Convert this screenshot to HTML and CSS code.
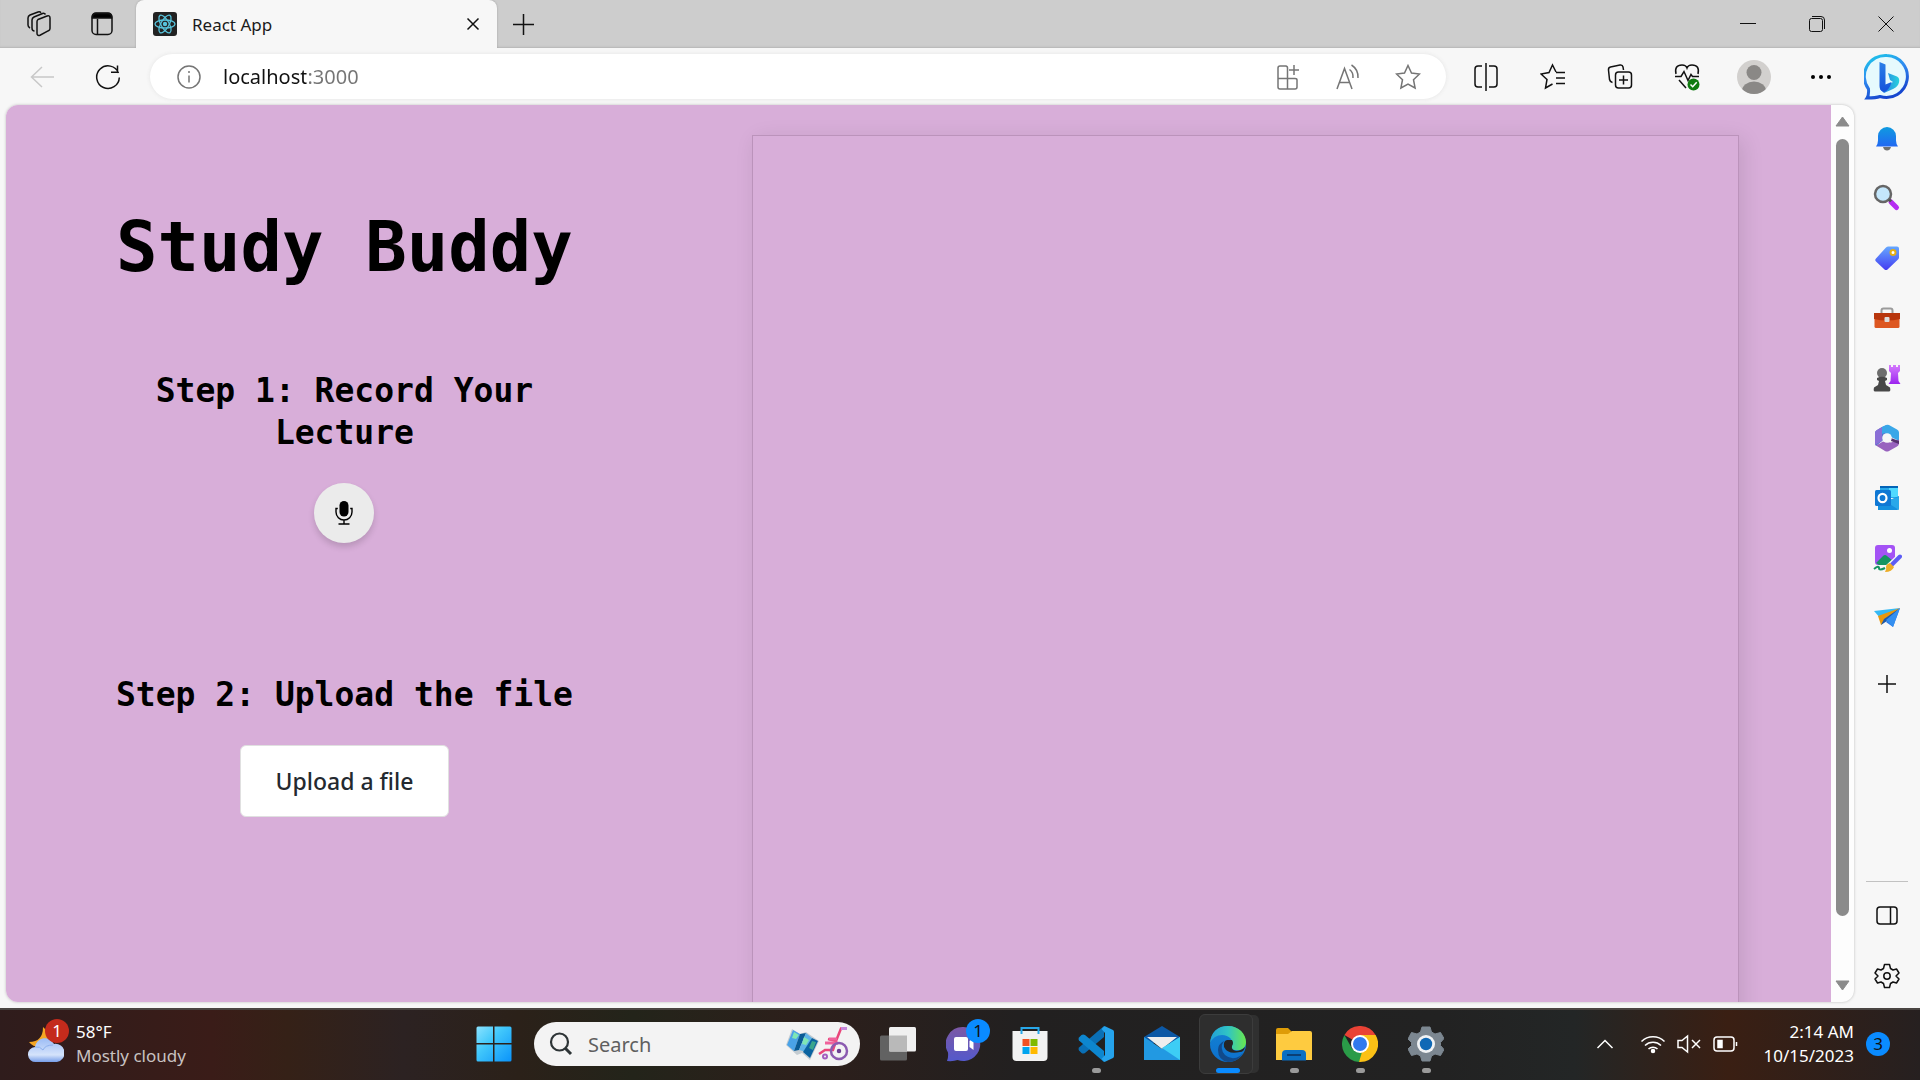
FILE: index.html
```html
<!DOCTYPE html>
<html lang="en">
<head>
  <meta charset="UTF-8" />
  <meta name="viewport" content="width=device-width, initial-scale=1" />
  <title>React App</title>
  <link rel="stylesheet" href="styles.css">
</head>
<body>
  <div class="browser">
    <!-- Tab strip -->
    <header class="tabs">
      <div class="tab-tools">
        <button type="button" aria-label="Workspaces">
          <svg width="24" height="26" viewBox="0 0 24 26" class="line"><path d="M11 8.500l9-3.500q3-1 3 2v10.500q0 1.500-1.500 2.200l-8.500 4.500q-3 1-3-2v-11.500q0-1.500 1-2.200z"/><path d="M7.500 20q-2.500 0-2.500-3v-8q0-2 2-3l8.500-3.500q2-.6 3 1M3 17q-2-1-2-3v-7q0-2 2-3l8-3q2-.6 3 .8"/></svg>
        </button>
        <button type="button" aria-label="Tab actions">
          <svg width="22" height="24" viewBox="0 0 22 24" class="line"><rect x="1" y="1" width="20" height="21.500" rx="4"/><path d="M6.500 7v15"/><path d="M1.500 6V5q0-3.500 3.500-3.500h12q3.500 0 3.500 3.500v1z" fill="#000"/></svg>
        </button>
      </div>
      <div class="tab">
        <svg width="24" height="24" viewBox="0 0 24 24"><rect width="24" height="24" rx="3" fill="#222"/><g fill="none" stroke="#58c4dc" stroke-width="1.300"><ellipse cx="12" cy="12" rx="10" ry="4"/><ellipse cx="12" cy="12" rx="10" ry="4" transform="rotate(60 12 12)"/><ellipse cx="12" cy="12" rx="10" ry="4" transform="rotate(120 12 12)"/></g><circle cx="12" cy="12" r="2.200" fill="#58c4dc"/></svg>
        <span class="tab-title">React App</span>
        <button type="button" aria-label="Close tab">
          <svg width="14" height="14" viewBox="0 0 14 14" class="line"><path d="M1.500 1.500l11 11M12.500 1.500l-11 11"/></svg>
        </button>
      </div>
      <button type="button" class="new-tab" aria-label="New tab">
        <svg width="21" height="21" viewBox="0 0 21 21" class="line"><path d="M10.500 0v21M0 10.500h21"/></svg>
      </button>
      <div class="window-buttons">
        <button type="button" aria-label="Minimize"><svg width="16" height="16" viewBox="0 0 16 16" class="line thin"><path d="M0 7.500h16"/></svg></button>
        <button type="button" aria-label="Restore"><svg width="16" height="16" viewBox="0 0 16 16" class="line thin"><rect x=".5" y="2.500" width="13" height="13" rx="2"/><path d="M3 .5h9q3.500 0 3.500 3.500v9"/></svg></button>
        <button type="button" aria-label="Close"><svg width="16" height="16" viewBox="0 0 16 16" class="line thin"><path d="M.5.5l15 15M15.500.5l-15 15"/></svg></button>
      </div>
    </header>

    <!-- Address bar -->
    <nav class="toolbar">
      <button type="button" class="back" aria-label="Back" disabled>
        <svg width="24" height="22" viewBox="0 0 24 22" class="line"><path d="M12 1L1.500 11 12 21M1.500 11H24"/></svg>
      </button>
      <button type="button" aria-label="Refresh">
        <svg width="26" height="26" viewBox="0 0 26 26" class="line"><path d="M23.500 9A11.300 11.300 0 1 0 24.300 13.500M22.500 1.500V8.200H16"/></svg>
      </button>
      <div class="omnibox">
        <svg width="24" height="24" viewBox="0 0 24 24" class="line gray"><circle cx="12" cy="12" r="11"/><path d="M12 10.500v7M12 6v2"/></svg>
        <input type="text" class="url" value="localhost:3000" aria-label="Address" />
        <button type="button" aria-label="Apps">
          <svg width="24" height="28" viewBox="0 0 24 28" class="line gray"><path d="M10.500 3H4Q2 3 2 5v19q0 2 2 2h15q2 0 2-2v-7q0-1.500-2-1.500H2M11.500 26V5q0-2-2-2M18 2v10M13 7h10"/></svg>
        </button>
        <button type="button" aria-label="Read aloud">
          <svg width="24" height="28" viewBox="0 0 24 28" class="line gray"><path d="M1 26L8.500 5.500 16 26M3.500 19.500h10M13.500 6.500q4 3 3.500 8.500M15.500 2q7 4.500 6.500 13"/></svg>
        </button>
        <button type="button" aria-label="Add to favorites">
          <svg width="26" height="26" viewBox="0 0 26 26" class="line gray"><path d="M13 1.500l3.500 7.500 8 1-6 5.700 1.600 8.300-7.100-4-7.100 4 1.600-8.300-6-5.700 8-1z"/></svg>
        </button>
      </div>
      <div class="toolbar-buttons">
        <button type="button" aria-label="Split screen"><svg width="26" height="28" viewBox="0 0 26 28" class="line"><path d="M9 3H5Q2 3 2 6v15q0 3 3 3h4M16 3h5q3 0 3 3v15q0 3-3 3h-5M13 0v28"/></svg></button>
        <button type="button" aria-label="Favorites"><svg width="26" height="28" viewBox="0 0 26 28" class="line"><path d="M16 9l-3.500-7L9 9.500 1 11l6 5.500L5.500 25l7-4M16 9.500h9M16 15h9M16 20.500h9"/></svg></button>
        <button type="button" aria-label="Collections"><svg width="26" height="28" viewBox="0 0 26 28" class="line"><path d="M5.500 19.500q-2.500-.5-3-3L1.500 7q-.3-2.500 2-3L13 2q2.500-.4 3 2l.5 3"/><rect x="8.500" y="9" width="16" height="16" rx="3"/><path d="M16.500 12.500v9M12 17h9"/></svg></button>
        <button type="button" aria-label="Browser essentials"><svg width="26" height="28" viewBox="0 0 26 28" class="line"><path d="M2 11q-2-9 6-9 4 0 5 3 1-3 5-3 8 0 6 9M5 17l7 8M1 13.500h6l3-5 4 9 3-6 1.500 2H25"/><circle cx="19.500" cy="21.500" r="6" fill="#107c10" stroke="none"/><path d="M16.500 21.500l2.200 2.200 4-4.500" stroke="#fff"/></svg></button>
        <button type="button" aria-label="Profile"><svg width="34" height="34" viewBox="0 0 34 34"><clipPath id="face"><circle cx="17" cy="17" r="17"/></clipPath><g clip-path="url(#face)"><path d="M0 0h34v34H0z" fill="#d2d0ce"/><circle cx="17" cy="12.500" r="7.500" fill="#8a8886"/><ellipse cx="17" cy="31" rx="12" ry="9.500" fill="#8a8886"/></g></svg></button>
        <button type="button" aria-label="Settings and more"><svg width="22" height="6" viewBox="0 0 22 6"><circle cx="3" cy="3" r="2"/><circle cx="11" cy="3" r="2"/><circle cx="19" cy="3" r="2"/></svg></button>
      </div>
    </nav>

    <div class="content">
      <main class="page">
        <section class="steps">
          <h1>Study Buddy</h1>
          <div class="step">
            <h2>Step 1: Record Your Lecture</h2>
            <button type="button" class="mic" aria-label="Record">
              <svg width="18" height="24" viewBox="0 0 18 24"><rect x="4.500" width="9" height="15.500" rx="4.500"/><path d="M2.800 7.500H1V11a8 8 0 0 0 16 0V7.500h-1.800M9 19v4M3.500 23h11" fill="none" stroke="#000" stroke-width="1.400"/></svg>
            </button>
          </div>
          <div class="step upload">
            <h2>Step 2: Upload the file</h2>
            <button type="button" class="upload-button">Upload a file</button>
          </div>
        </section>
        <section class="notes" aria-label="Notes"></section>
      </main>
      <div class="scrollbar">
        <svg width="15" height="11" viewBox="0 0 15 11"><path d="M7.500 1L14 10H1z" fill="#8b8b8b" stroke="#8b8b8b" stroke-linejoin="round"/></svg>
        <div class="track"><div class="thumb"></div></div>
        <svg width="15" height="11" viewBox="0 0 15 11"><path d="M7.500 10L14 1H1z" fill="#8b8b8b" stroke="#8b8b8b" stroke-linejoin="round"/></svg>
      </div>
    </div>

    <!-- Edge sidebar -->
    <aside class="sidebar">
      <button type="button" class="bing" aria-label="Bing chat">
        <svg width="46" height="48" viewBox="0 0 46 48"><defs><linearGradient id="ring" x1="0" y1="0" x2=".4" y2="1"><stop offset="0" stop-color="#1ccbe8"/><stop offset=".5" stop-color="#2f8bf0"/><stop offset="1" stop-color="#1648cf"/></linearGradient><linearGradient id="bee" x1="0" y1="0" x2="0" y2="1"><stop offset="0" stop-color="#2a7fe8"/><stop offset="1" stop-color="#1552da"/></linearGradient><linearGradient id="curl"><stop offset="0" stop-color="#2a6fe8"/><stop offset="1" stop-color="#25d3dc"/></linearGradient></defs><path d="M23 2.500a21 21 0 1 1-7 41q-4 1.500-13 1.500 2-3 1.500-9A21 21 0 0 1 23 2.500z" fill="#e6fafd" stroke="url(#ring)" stroke-width="3"/><path d="M24 20l9 3.500q3 1.500 2 6-1 4-6 6.500l-9 4-4-4 13-7-3-2z" fill="url(#curl)"/><path d="M15.500 9l6 2.500v20l6-2.500q-2 8-7.500 10-4.500-1-4.500-6z" fill="url(#bee)"/></svg>
      </button>
      <div class="apps">
        <button type="button" aria-label="Notifications"><svg width="28" height="28" viewBox="0 0 28 28"><defs><linearGradient id="bell" x2="0" y2="1"><stop stop-color="#0f9be0"/><stop offset="1" stop-color="#2268f2"/></linearGradient></defs><path d="M10 23h8q-1 3.500-4 3.500T10 23z" fill="#707070"/><path d="M3 22.500q2-3 2-6V12a9 9 0 0 1 18 0v4.500q0 3 2 6z" fill="url(#bell)"/></svg></button>
        <button type="button" aria-label="Search"><svg width="28" height="28" viewBox="0 0 28 28"><path d="M18 18l5.500 5.500" stroke="#b52df1" stroke-width="5" stroke-linecap="round"/><circle cx="10" cy="10" r="8" fill="#c4e7fc" stroke="#666" stroke-width="2.500"/><path d="M16 15.500l2 2" stroke="#555" stroke-width="3"/></svg></button>
        <button type="button" aria-label="Shopping"><svg width="28" height="28" viewBox="0 0 28 28"><defs><linearGradient id="tag" x2="0" y2="1"><stop stop-color="#66a8ff"/><stop offset="1" stop-color="#443df2"/></linearGradient></defs><path d="M15 2.500h9q2 0 2 2v9q0 1-1 2L14.500 25.500q-1.500 1-3 0l-8.500-8q-1.500-1.500 0-3L12.500 4q1-1.500 2.500-1.500z" fill="url(#tag)"/><circle cx="20" cy="8.500" r="2.500" fill="#fff" stroke="#e6ae12" stroke-width="2"/></svg></button>
        <button type="button" aria-label="Tools"><svg width="28" height="28" viewBox="0 0 28 28"><path d="M8.500 10V6.500q0-2 2-2h7q2 0 2 2V10" fill="none" stroke="#9b9b9b" stroke-width="2"/><rect x="1.500" y="11" width="25" height="13" rx="1.500" fill="#dd5721"/><path d="M1 9h26v6q-13 3-26 0z" fill="#b8360d"/><rect x="11.500" y="13" width="5" height="5" rx="1" fill="#ddd"/></svg></button>
        <button type="button" aria-label="Games"><svg width="28" height="28" viewBox="0 0 28 28"><defs><linearGradient id="rook" x2="0" y2="1"><stop stop-color="#d47bfd"/><stop offset="1" stop-color="#9c24ef"/></linearGradient></defs><path d="M16 1h2v2h2V1h3v2h2V1h2v6l-2 2 .5 8 2 3H15.500l2-3 .5-8-2-2z" fill="url(#rook)"/><circle cx="9" cy="9" r="5" fill="#6d6d6d"/><path d="M4 14q5-2.500 10 0v2l-2 1 1 4 4 2.500q1 4-1 4H2q-2 0-1-4l4-2.500 1-4-2-1z" fill="#484848"/></svg></button>
        <button type="button" aria-label="Microsoft 365"><svg width="28" height="28" viewBox="0 0 28 28"><path d="M9 3L14 1l2 9-7 7-6 5q-1-1-1-3V9q0-2 2-3z" fill="#5470cc"/><path d="M9 3v14l-7 4V9q0-2 2-3z" fill="#8a6fd6"/><path d="M9 3l4-2q1.500-.5 3 0l8 4.500q2 1 2 3V17l-8-4-6-4-3 1z" fill="#3aa7e8"/><path d="M3 21.500l7-4 8 1 8-3v4q0 2-2 3l-8 4.500q-2 1-4 0z" fill="#9862be"/><path d="M18 14l8 3v3l-8-3z" fill="#57326f"/><circle cx="14" cy="14" r="4.800" fill="#f7f7f7"/></svg></button>
        <button type="button" aria-label="Outlook"><svg width="28" height="28" viewBox="0 0 28 28"><path d="M7 2h18v12H7z" fill="#28a8ea"/><path d="M16 3h9v10h-9z" fill="#50d9ff"/><path d="M7 2h18v2H7z" fill="#0364b8"/><path d="M5 12l10 5 11-5v12q0 2-2 2H5z" fill="#1490df"/><path d="M26 13v13L12 17z" fill="#28a8ea"/><rect x="2" y="6" width="16" height="16" rx="1.500" fill="#0f78d4"/><ellipse cx="9.500" cy="14" rx="4" ry="4.200" fill="none" stroke="#fff" stroke-width="2.200"/></svg></button>
        <button type="button" aria-label="Image creator"><svg width="30" height="30" viewBox="0 0 30 30"><rect x="3" y="2" width="20" height="20" rx="3" fill="#a453f5"/><path d="M4 20l7-7q2-2 4 0l6 5-4 4H7z" fill="#169462"/><circle cx="17.500" cy="7.500" r="2.500" fill="#fff"/><path d="M29 13L16 25" stroke="#f7f7f7" stroke-width="7"/><path d="M28 13.500l-8 8" stroke="#5c5cf5" stroke-width="4" stroke-linecap="round"/><path d="M18 20l4 4q-2 5-9 5 2-3 1-5 0-3 4-4z" fill="#edae28"/><path d="M2 26q5-4 5-1t6 0" fill="none" stroke="#169462" stroke-width="2"/></svg></button>
        <button type="button" aria-label="Drop"><svg width="28" height="28" viewBox="0 0 28 28"><path d="M1 7L27 4 8 15z" fill="#35b9f4"/><path d="M27 4L20 23 13 18z" fill="#2575e8"/><path d="M27 4L5 12l3 9z" fill="#e9970c"/><path d="M8 21l3-6L27 4 14 17z" fill="#1b59ad"/><path d="M27 4L13 16l7 7z" fill="#348ff0"/></svg></button>
      </div>
      <button type="button" class="add-app" aria-label="Customize"><svg width="18" height="18" viewBox="0 0 18 18" class="line"><path d="M9 0v18M0 9h18"/></svg></button>
      <div class="sidebar-bottom">
        <button type="button" aria-label="Hide sidebar"><svg width="22" height="20" viewBox="0 0 22 20" class="line"><rect x="1" y="1" width="20" height="17" rx="3"/><path d="M14.500 1v17"/></svg></button>
        <button type="button" aria-label="Settings"><svg width="26" height="26" viewBox="0 0 26 26" class="line"><path d="M10.500 1.500h5l1 4 2.500 1.500 3.500-1 2.500 4-3 3 3 3-2.500 4-3.500-1-2.500 1.500-1 4h-5l-1-4L7 19l-3.500 1L1 16l3-3-3-3 2.500-4L7 7l2.500-1.500z" stroke-linejoin="round"/><circle cx="13" cy="13" r="3.200"/></svg></button>
      </div>
    </aside>
  </div>

  <!-- Windows taskbar -->
  <footer class="taskbar">
    <div class="weather">
      <div class="weather-icon">
        <svg width="36" height="40" viewBox="0 0 36 40"><defs><linearGradient id="cloud" x2="0" y2="1"><stop stop-color="#9cbcf5"/><stop offset=".7" stop-color="#d5e3fb"/><stop offset="1" stop-color="#769de8"/></linearGradient></defs><path d="M15 3q5 4 5 10 0 9-9 10-6 0-10-5 14 0 14-15z" fill="#f5a623"/><path d="M8 38a7.500 7.500 0 0 1-1-15 10 10 0 0 1 19-3 9 9 0 0 1 3 18z" fill="url(#cloud)"/><path d="M7 23q5-1 8 3 2-5 10-5" fill="none" stroke="#8db0ed"/></svg>
        <span class="alert">1</span>
      </div>
      <div class="weather-text">
        <span>58°F</span>
        <span class="muted">Mostly cloudy</span>
      </div>
    </div>

    <div class="dock">
      <button type="button" class="app" aria-label="Start"><svg width="36" height="36" viewBox="0 0 36 36"><defs><linearGradient id="win" x2="1" y2="1"><stop stop-color="#8be3ff"/><stop offset=".4" stop-color="#42c8fb"/><stop offset="1" stop-color="#0a93fa"/></linearGradient></defs><path d="M2 .5h15v16.500H.5V2Q.5.500 2 .5zM18.500.5H34q1.500 0 1.500 1.500v15h-17zM.5 18.500H17v17H2q-1.500 0-1.500-1.500zM18.500 18.500h17V34q0 1.500-1.500 1.500H18.500z" fill="url(#win)"/></svg></button>
      <div class="search">
        <svg width="24" height="24" viewBox="0 0 24 24"><circle cx="10.500" cy="10" r="8.500" fill="none" stroke="#2d3436" stroke-width="2.200"/><path d="M16.500 16.500l5.500 5.500" stroke="#2d3436" stroke-width="3"/></svg>
        <input type="search" placeholder="Search" aria-label="Search" />
        <svg width="64" height="34" viewBox="0 0 64 34"><path d="M7 2l8 5 6-2 13 9-9 19-8-7-5 2L1 18z" fill="#c4ccd2"/><path d="M8 3l7 4-6 17-7-6z" fill="#4aa3e8"/><path d="M15 7l6-1-7 17-5 1z" fill="#0a5c96"/><path d="M21 6l6 5-5 14-8-2z" fill="#5db4e8"/><path d="M27 11l6 3-8 17-7-6z" fill="#0b63a0"/><path d="M9 5l5 3-3 4-4-1zM19 10l5 3-3 5-4-1z" fill="#7fe7b4"/><path d="M27 14l4 1-3 8-4-2z" fill="#39a58c"/><g fill="none" stroke-width="2.500"><path d="M62 1.500h-6L51 14l-8-2M51 14l-3 9H40l-6 4" stroke="#e9467a"/><path d="M40 16h13M44 12h8" stroke="#f0629b" stroke-width="3"/><circle cx="54" cy="24" r="8" stroke="#8b5bb0"/><circle cx="54" cy="24" r="1" stroke="#6a3d91"/><circle cx="40" cy="29.500" r="2" stroke="#a35ec0" stroke-width="2"/></g><path d="M56 1.500h6" stroke="#c689dc" stroke-width="3"/></svg>
      </div>
      <button type="button" class="app" aria-label="Task view"><svg width="36" height="36" viewBox="0 0 36 36"><rect y="9.500" width="27" height="25" rx="1.500" fill="#626262"/><rect x="9" y="1" width="27" height="24.500" rx="1.500" fill="#f0f0f0"/><path d="M9 9.500h18v16H10q-1 0-1-1z" fill="#b9b9b9"/></svg></button>
      <button type="button" class="app" aria-label="Chat"><svg width="36" height="36" viewBox="0 0 36 36"><defs><linearGradient id="chat" x2="0" y2="1"><stop stop-color="#7c58a5"/><stop offset="1" stop-color="#5459cb"/></linearGradient></defs><path d="M17.500 1a17 17 0 1 1-6 33Q8 35.500 1 35q1.500-3 1-8.500A17 17 0 0 1 17.500 1z" fill="url(#chat)"/><rect x="8" y="11" width="14" height="14" rx="2" fill="#fff"/><path d="M23.500 15l4-3v12l-4-3z" fill="#fff"/></svg><span class="count">1</span></button>
      <button type="button" class="app" aria-label="Microsoft Store"><svg width="36" height="36" viewBox="0 0 36 36"><path d="M.5 5h35v26q0 4-4 4h-27q-4 0-4-4z" fill="#f2f2f2"/><path d="M9.500 8V2h17v6" fill="none" stroke="#28a8ea" stroke-width="2"/><path d="M10.500 13h7v7h-7z" fill="#f25022"/><path d="M18.500 13h7v7h-7z" fill="#7fba00"/><path d="M10.500 21h7v7h-7z" fill="#00a4ef"/><path d="M18.500 21h7v7h-7z" fill="#ffb900"/></svg></button>
      <button type="button" class="app running" aria-label="Visual Studio Code"><svg width="36" height="36" viewBox="0 0 36 36"><path d="M26 0v11L7 27q-2 1-3.500 0L1 24.500q-1-1.500 0-3z" fill="#0a6fb5"/><path d="M26 36V25L7 9Q5 8 3.500 9L1 11.500q-1 1.500 0 3z" fill="#0d86cf"/><path d="M26.500 0L35 4q1 .5 1 2v24q0 1.500-1 2l-8.500 4-3-3 3.500-4V7l-3.500-4z" fill="#25a3ec"/></svg></button>
      <button type="button" class="app" aria-label="Mail"><svg width="36" height="36" viewBox="0 0 36 36"><path d="M0 11L18 0l18 11v6H0z" fill="#0c58a5"/><path d="M3 11h30L18 23z" fill="#eee"/><path d="M0 11l18 12L36 11v23H0z" fill="#2299e2"/><path d="M36 11L18 22l18 12z" fill="#3dcdf5"/></svg></button>
      <button type="button" class="app active" aria-label="Microsoft Edge"><svg width="36" height="36" viewBox="0 0 36 36"><defs><linearGradient id="edge1"><stop stop-color="#219fd8"/><stop offset=".5" stop-color="#30c4c4"/><stop offset="1" stop-color="#69e84e"/></linearGradient><linearGradient id="edge2" x2="0" y2="1"><stop stop-color="#1583d2"/><stop offset="1" stop-color="#0c70ce"/></linearGradient></defs><circle cx="18" cy="18" r="18" fill="url(#edge2)"/><path d="M0 17Q2 0 18 0c11 0 18 8 18 16 0 6-5 9-10 8-4 0-5-2-4-4 2-6-3-11-10-11Q4 9 0 17z" fill="url(#edge1)"/><path d="M14 15q-5 7 1 14 7 6 15 1l3-3Q28 36 18 36 8 34 8 24q0-6 6-9z" fill="#114a8b"/><path d="M22 14q2 3 0 6-1 4 4 5 5 0 9-4-1 5-5 5-12 3-16-5-1-6 3-7z" fill="#252525"/></svg></button>
      <button type="button" class="app running" aria-label="File Explorer"><svg width="36" height="36" viewBox="0 0 36 36"><path d="M0 4q0-2 2-2h10l4 4-3 4H0z" fill="#de9c07"/><path d="M0 8h12l4-3h18q2 0 2 2v27H0z" fill="#fecb40"/><path d="M6 34.500V28q0-4 4-4h16q4 0 4 4v6.500z" fill="#0a6fc2"/><path d="M11 29h14" stroke="#0b3f75" stroke-width="2"/></svg></button>
      <button type="button" class="app running" aria-label="Google Chrome"><svg width="36" height="36" viewBox="0 0 36 36"><path d="M18 18L2.400 9A18 18 0 0 1 33.600 9z" fill="#e94235"/><path d="M18 18V9h15.600A18 18 0 0 1 18 36z" fill="#fbc116"/><path d="M2.400 9L10 22.500l8 4.500 4-1-5 10A18 18 0 0 1 2.400 9z" fill="#2a9b48"/><path d="M26 22l-8 14H17l3-10z" fill="#fbc116"/><circle cx="18" cy="18" r="9" fill="#fff"/><circle cx="18" cy="18" r="7" fill="#3079ee"/></svg></button>
      <button type="button" class="app running" aria-label="Settings"><svg width="36" height="36" viewBox="0 0 36 36"><path d="M14 1h8l1.500 5 3.500 2 5.500-1.500 3.500 6-3.500 4v3l3.500 4-3.500 6-5.500-1.500-3.500 2L22 35h-8l-1.500-5L9 28l-5.500 1.500L0 23l3.500-3.500v-3L0 13l3.500-6.500L9 8l3.500-2z" fill="#7c8791" stroke="#7c8791" stroke-linejoin="round"/><circle cx="18" cy="18" r="9" fill="#f1f3f5"/><circle cx="18" cy="18" r="6.200" fill="#0f68b5"/></svg></button>
    </div>

    <div class="tray">
      <svg width="18" height="12" viewBox="0 0 18 12" class="line white chevron"><path d="M1.500 10L9 2.500 16.500 10"/></svg>
      <svg width="26" height="20" viewBox="0 0 26 20" class="line white"><path d="M1.500 7.500a16.500 16.500 0 0 1 23 0M5 11.500a11.500 11.500 0 0 1 16 0M8.500 15a6.500 6.500 0 0 1 9 0"/><circle cx="13" cy="17" r="1.500" fill="#fff"/></svg>
      <svg width="26" height="20" viewBox="0 0 26 20" class="line white"><path d="M2 6.500h4L11.500 2v16L6 13.500H2zM16 6l8 8M24 6l-8 8"/></svg>
      <svg width="26" height="20" viewBox="0 0 26 20" class="line white"><rect x="2" y="3" width="20" height="14" rx="3"/><path d="M24.500 8v4"/><path d="M6 6.500h4v7H6z" fill="#fff"/></svg>
      <div class="clock">
        <span>2:14 AM</span>
        <span>10/15/2023</span>
      </div>
      <span class="notifications">3</span>
    </div>
  </footer>
</body>
</html>
```
FILE: styles.css
```css
* {
  box-sizing: border-box;
}

body {
  font-family: 'Noto Sans', 'Open Sans', sans-serif;
  margin: 0;
  height: 100vh;
  display: flex;
  flex-direction: column;
  overflow: hidden;
}

button {
  display: flex;
  align-items: center;
  justify-content: center;
  padding: 0;
  border: none;
  background: none;
  font-family: inherit;
  color: inherit;
}

svg {
  display: block;
  flex: none;
}

/* Line icons */
.line {
  fill: none;
  stroke: #111;
  stroke-width: 1.5;
}
.thin {
  stroke-width: 1;
}
.gray {
  stroke: #757575;
}
.white {
  stroke: #fff;
}

/* Browser window */
.browser {
  flex: 1;
  min-height: 0;
  display: grid;
  grid-template-columns: 1fr 66px;
  grid-template-rows: 48px 57px 1fr;
  background-color: #f7f7f7;
}

.tabs {
  grid-column: 1 / 3;
  display: flex;
  align-items: stretch;
  background-color: #cdcdcd;
  box-shadow: inset 0 -2px 2px -1px #b5b5b5;
}

.tab-tools {
  display: flex;
  width: 136px;
  padding-left: 7px;
}
.tab-tools button {
  width: 63px;
}

.tab {
  display: flex;
  align-items: center;
  width: 361px;
  padding: 0 17px;
  background-color: #f7f7f7;
  border-radius: 8px 8px 0 0;
  box-shadow: 0 0 2px #999;
  clip-path: inset(0 -3px 0 -3px);
}
.tab-title {
  flex: 1;
  margin-left: 15px;
  font-size: 17px;
  color: #1b1b1b;
}

.new-tab {
  width: 52px;
}

.window-buttons {
  display: flex;
  margin-left: auto;
}
.window-buttons button {
  width: 69px;
}

/* Toolbar */
.toolbar {
  display: flex;
  align-items: center;
  padding-left: 9px;
}
.toolbar > button {
  width: 66px;
  height: 44px;
}
.back svg {
  stroke: #c8c8c8;
}

.omnibox {
  flex: 1;
  display: flex;
  align-items: center;
  height: 45px;
  margin-left: 9px;
  padding: 0 8px 0 27px;
  background-color: #fff;
  border-radius: 23px;
  box-shadow: 0 0 4px #e4e4e4;
}
.omnibox button {
  width: 60px;
  height: 44px;
}

.url {
  flex: 1;
  margin-left: 22px;
  padding: 0;
  border: none;
  outline: none;
  font-family: inherit;
  font-size: 20px;
  /* host in black, port in gray */
  background-image: linear-gradient(90deg, #111 83px, #757575 83px);
  -webkit-background-clip: text;
  background-clip: text;
  color: transparent;
}

.toolbar-buttons {
  display: flex;
  margin-left: 6px;
}
.toolbar-buttons button {
  width: 67px;
  height: 44px;
}

/* Web page */
.content {
  display: flex;
  min-height: 0;
  margin: 0 0 6px 6px;
  border-radius: 12px;
  overflow: hidden;
  background-color: #fdfdfd;
  box-shadow: 0 0 3px #bbb;
}

.page {
  flex: 1;
  display: flex;
  justify-content: space-between;
  padding: 30px 5% 0;
  overflow: hidden;
  background-color: #d8aed9;
}

.steps {
  width: 30%;
  display: flex;
  flex-direction: column;
  align-items: center;
  padding-top: 72px;
  font-family: 'DejaVu Sans Mono', monospace;
  text-align: center;
  color: #000;
}

h1 {
  margin: 0;
  font-size: 69px;
  line-height: 80px;
  white-space: nowrap;
}

h2 {
  margin: 0 0 29px;
  font-size: 33px;
  line-height: 42px;
}

.step {
  display: flex;
  flex-direction: column;
  align-items: center;
  margin-top: 83px;
}
.upload {
  margin-top: 131px;
}

.mic {
  width: 60px;
  height: 60px;
  border-radius: 50%;
  background-color: #ebebeb;
  box-shadow: 0 4px 6px rgba(0, 0, 0, 0.15);
}

.upload-button {
  width: 209px;
  height: 72px;
  border: 1px solid #e0e0e0;
  border-radius: 6px;
  background-color: #fff;
  font-family: 'Noto Sans', 'Open Sans', sans-serif;
  font-size: 23px;
  font-weight: 500;
  color: #24292f;
}

.notes {
  box-sizing: content-box;
  width: 60%;
  height: 120vh;
  flex: none;
  border: 1px solid #bb93bb;
  box-shadow: 4px 4px 20px rgba(0, 0, 0, 0.1);
}

.scrollbar {
  width: 23px;
  display: flex;
  flex-direction: column;
  align-items: center;
  padding: 11px 0;
}
.track {
  flex: 1;
  width: 13px;
  padding: 12px 0 14px;
}
.thumb {
  height: 94%;
  border-radius: 7px;
  background-color: #8b8b8b;
}

/* Sidebar */
.sidebar {
  grid-column: 2;
  grid-row: 2 / 4;
  display: flex;
  flex-direction: column;
  align-items: center;
}
.sidebar button {
  width: 60px;
  height: 60px;
}
.sidebar .bing {
  height: 58px;
}
.apps {
  padding-top: 2px;
}
.sidebar .add-app {
  margin-top: 6px;
}
.sidebar-bottom {
  margin-top: auto;
  padding: 4px 0 2px;
  width: 42px;
  display: flex;
  flex-direction: column;
  align-items: center;
  border-top: 1px solid #c2c2c2;
}

/* Taskbar */
.taskbar {
  flex: none;
  display: grid;
  grid-template-columns: 1fr auto 1fr;
  height: 72px;
  padding-bottom: 2px;
  border-top: 2px solid #4a4542;
  background-image: linear-gradient(90deg, #2f1c1c, #3a1c18 11%, #352117 15%, #2c2222 21%, #2b2119 27%, #23241a 33%, #2d1f1b 42%, #222020 53%, #222222 75%, #232626 82%, #3a1f13 90%, #262020);
  color: #fff;
  font-size: 17px;
  line-height: 24px;
}

.weather {
  display: flex;
  align-items: center;
  padding-left: 28px;
}
.weather-icon {
  position: relative;
  width: 48px;
}
.alert,
.count,
.notifications {
  width: 24px;
  height: 24px;
  border-radius: 50%;
  text-align: center;
}
.alert {
  position: absolute;
  top: -5px;
  left: 17px;
  background-color: #c42b1c;
}
.weather-text,
.clock {
  display: flex;
  flex-direction: column;
}
.muted {
  color: #c8c2c1;
}

.dock {
  display: flex;
  align-items: center;
}
.app {
  position: relative;
  width: 66px;
  height: 60px;
}
.running::after,
.active::after {
  content: '';
  position: absolute;
  bottom: 1px;
  width: 9px;
  height: 5px;
  border-radius: 3px;
  background-color: #9a9a9a;
}
.active::after {
  width: 24px;
  background-color: #0a8bff;
}
.active::before {
  content: '';
  position: absolute;
  inset: 0 8px 0 4px;
  border: 1px solid #3c3c3c;
  border-radius: 6px;
  background-color: #2e2e2e;
  box-shadow: 7px 0 0 -1px #303030;
}
.active svg {
  position: relative;
}

.count {
  position: absolute;
  top: 5px;
  right: 7px;
  background-color: #0a8bff;
  color: #111;
  font-size: 17px;
}

.search {
  display: flex;
  align-items: center;
  width: 326px;
  height: 44px;
  margin: 0 5px 0 7px;
  padding: 0 11px 0 15px;
  border-radius: 22px;
  background-color: #f3f3f3;
}
.search input {
  flex: 1;
  min-width: 0;
  margin-left: 15px;
  padding: 0;
  border: none;
  outline: none;
  background: none;
  font-family: inherit;
  font-size: 20px;
}
.search input::placeholder {
  color: #5f5f5f;
}

.tray {
  display: flex;
  align-items: center;
  justify-content: flex-end;
  gap: 10px;
  padding-right: 30px;
}
.chevron {
  margin-right: 16px;
}
.clock {
  margin-left: 16px;
  text-align: right;
}
.notifications {
  background-color: #0a8bff;
  color: #111;
  margin-left: 2px;
}
```
